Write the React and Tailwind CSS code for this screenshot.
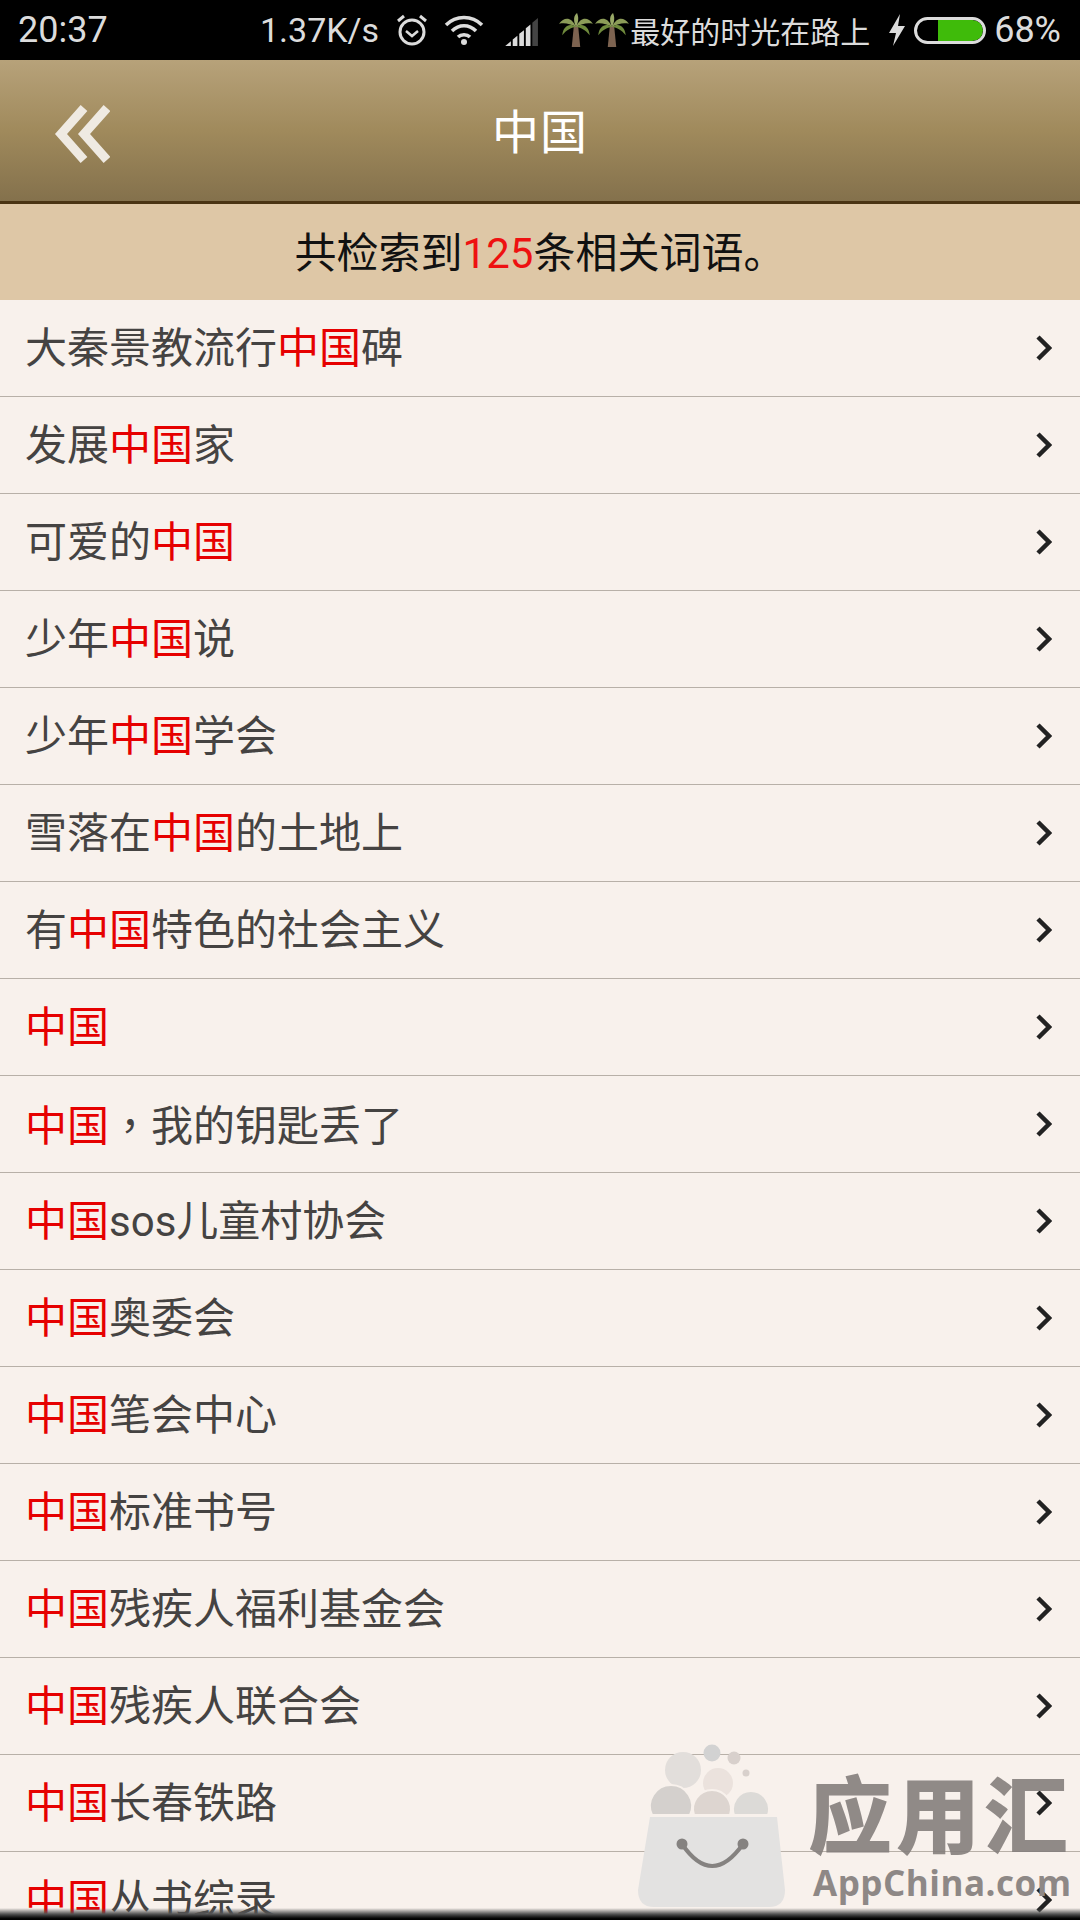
import React from "react";

const rows = [
  ["大秦景教流行", "中国", "碑"],
  ["发展", "中国", "家"],
  ["可爱的", "中国", ""],
  ["少年", "中国", "说"],
  ["少年", "中国", "学会"],
  ["雪落在", "中国", "的土地上"],
  ["有", "中国", "特色的社会主义"],
  ["", "中国", ""],
  ["", "中国", <span key="c"><span className="font-['Noto_Sans_CJK_TC',sans-serif]">，</span>我的钥匙丢了</span>],
  ["", "中国", "sos儿童村协会"],
  ["", "中国", "奥委会"],
  ["", "中国", "笔会中心"],
  ["", "中国", "标准书号"],
  ["", "中国", "残疾人福利基金会"],
  ["", "中国", "残疾人联合会"],
  ["", "中国", "长春铁路"],
  ["", "中国", "丛书综录"],
];

function Palm() {
  return (
    <svg width="36" height="36" viewBox="0 0 34 34">
      <path d="M15 13 L19 13 L21 33 L13 33 Z" fill="#7d6350" />
      <path d="M17 14 C12 4 6 5 1 11 C7 10 11 11 17 14 Z" fill="#8c9c58" />
      <path d="M17 14 C22 4 28 5 33 11 C27 10 23 11 17 14 Z" fill="#8c9c58" />
      <path d="M17 14 C11 10 5 13 4 22 C8 17 12 15 17 14 Z" fill="#6f8a3c" />
      <path d="M17 14 C23 10 29 13 30 22 C26 17 22 15 17 14 Z" fill="#6f8a3c" />
      <path d="M17 14 C14 8 15 3 18 1 C20 6 19 10 17 14 Z" fill="#98a866" />
    </svg>
  );
}

function StatusBar() {
  return (
    <div className="h-[60px] bg-black flex items-center justify-between pl-[18px] pr-[19px] text-[#dcdcdc] text-[36px] font-['Roboto',sans-serif]">
      <span>20:37</span>
      <div className="flex items-center">
        <span className="text-[34px]">1.37K/s</span>
        <svg className="ml-[17px]" width="32" height="34" viewBox="0 0 32 34" fill="none" stroke="#dcdcdc" strokeWidth="3">
          <circle cx="16" cy="19" r="12" />
          <path d="M10 18 L16 23 L22 18" strokeWidth="2.5" />
          <path d="M2 8 L8 3 M30 8 L24 3" />
        </svg>
        <svg className="ml-[16px]" width="40" height="32" viewBox="0 0 40 32" fill="none" stroke="#dcdcdc" strokeWidth="3.5">
          <path d="M2 11 C12 1 28 1 38 11" />
          <path d="M8 17 C15 10 25 10 32 17" />
          <path d="M14 23 C17 20 23 20 26 23" />
          <circle cx="20" cy="28" r="3" fill="#dcdcdc" stroke="none" />
        </svg>
        <svg className="ml-[19px] mt-[4px]" width="40" height="28" viewBox="0 0 38 30">
          <path d="M0 30 L6 25 L6 30 Z" fill="#dcdcdc" />
          <path d="M8 23 L13 19 L13 30 L8 30 Z" fill="#dcdcdc" />
          <path d="M15 17 L20 13 L20 30 L15 30 Z" fill="#dcdcdc" />
          <path d="M22 11 L27 7 L27 30 L22 30 Z" fill="#dcdcdc" />
          <path d="M29 5 L35 0 L35 30 L29 30 Z" fill="#444" />
        </svg>
        <div className="ml-[15px] flex items-center">
          <Palm />
          <Palm />
        </div>
        <span className="text-[30px] font-['Noto_Sans_CJK_SC',sans-serif] leading-none">最好的时光在路上</span>
        <svg className="ml-[18px]" width="18" height="32" viewBox="0 0 18 32">
          <path d="M12 0 L1 19 L8 19 L5 32 L17 12 L10 12 Z" fill="#dcdcdc" />
        </svg>
        <div className="ml-[8px] w-[72px] h-[27px] rounded-full border-[3px] border-[#dcdcdc] overflow-hidden flex justify-end">
          <div className="w-[45px] h-full bg-[#3fbb0a] rounded-r-full" />
        </div>
        <span className="ml-[8px]">68%</span>
      </div>
    </div>
  );
}

function Header() {
  return (
    <div className="h-[144px] relative flex items-center justify-center pt-[5px] border-b-[3px] border-[#4a3413] bg-gradient-to-b from-[#b7a27a] via-[#a08a5c] to-[#84714c]">
      <svg className="absolute left-[54px] top-[45px]" width="56" height="58" viewBox="0 0 56 58" fill="none" stroke="#efeae2" strokeWidth="9">
        <path d="M30 3 L7 29 L30 55" />
        <path d="M53 3 L30 29 L53 55" />
      </svg>
      <span className="text-white text-[47px] tracking-[1px] font-['Roboto','Noto_Sans_CJK_SC',sans-serif]">中国</span>
    </div>
  );
}

function Watermark() {
  return (
    <div className="absolute left-[636px] top-[1742px] w-[444px] h-[170px] pointer-events-none">
      <svg className="absolute left-0 top-0" width="170" height="170" viewBox="0 0 170 170">
        <circle cx="76" cy="11" r="8.5" fill="#d2d2d2" />
        <circle cx="98" cy="16" r="6.5" fill="#d8d0cc" />
        <circle cx="110" cy="31" r="3.5" fill="#d8d0cc" />
        <circle cx="47" cy="28" r="18" fill="#e2dedb" />
        <circle cx="82" cy="41" r="15" fill="#ebe2dd" />
        <path d="M16 73 A 21 21 0 1 1 54 73 Z" fill="#d4d0cd" stroke="#f8f1ec" strokeWidth="2" />
        <path d="M58 73 A 19 19 0 1 1 94 73 Z" fill="#ddd5d0" stroke="#f8f1ec" strokeWidth="2" />
        <path d="M98 73 A 18 18 0 1 1 132 73 Z" fill="#dcdad7" stroke="#f8f1ec" strokeWidth="2" />
        <path d="M14 75 L141 75 L149 148 Q149 165 133 165 L18 165 Q2 165 2 148 Z" fill="#e3e2e1" />
        <path d="M46 102 Q76 146 107 102" fill="none" stroke="#858280" strokeWidth="4" />
        <circle cx="46" cy="102" r="5.5" fill="#858280" />
        <circle cx="107" cy="102" r="5.5" fill="#858280" />
      </svg>
      <div className="absolute left-[172px] top-[24px] flex items-center text-[#857f7d] opacity-90 text-[84px] leading-[90px] font-black font-['Noto_Sans_CJK_SC',sans-serif]">
        <span className="w-[88px]">应</span>
        <span className="w-[88px]">用</span>
        <span>汇</span>
      </div>
      <span className="absolute left-[177px] top-[121px] text-[#8e8886] text-[35px] leading-[40px] font-bold tracking-[0.5px] font-['Open_Sans',sans-serif]">AppChina.com</span>
    </div>
  );
}

export default function App() {
  return (
    <div className="relative w-[1080px] h-[1920px] overflow-hidden bg-[#f8f1ec] font-['Roboto','Noto_Sans_CJK_SC',sans-serif]">
      <StatusBar />
      <Header />
      <div className="h-[96px] bg-[#dec7a6] flex items-center justify-center pt-[2px] text-[42px] text-[#111]">
        共检索到<span className="text-[#ee1111]">125</span>条相关词语。
      </div>
      <div>
        {rows.map((row, i) => (
          <div key={i} className="h-[97px] flex items-center justify-between pl-[25px] pr-[28px] border-b border-[#b8b0a8] text-[42px] text-[#454342]">
            <span>
              {row[0]}
              <span className="text-[#e60000]">{row[1]}</span>
              {row[2]}
            </span>
            <svg width="16" height="26" viewBox="0 0 16 26" fill="none" stroke="#222" strokeWidth="4.5">
              <path d="M2 2 L13 13 L2 24" />
            </svg>
          </div>
        ))}
      </div>
      <Watermark />
      <div className="absolute left-0 bottom-0 w-full h-[12px] bg-gradient-to-b from-transparent via-[#555] to-black" />
    </div>
  );
}
